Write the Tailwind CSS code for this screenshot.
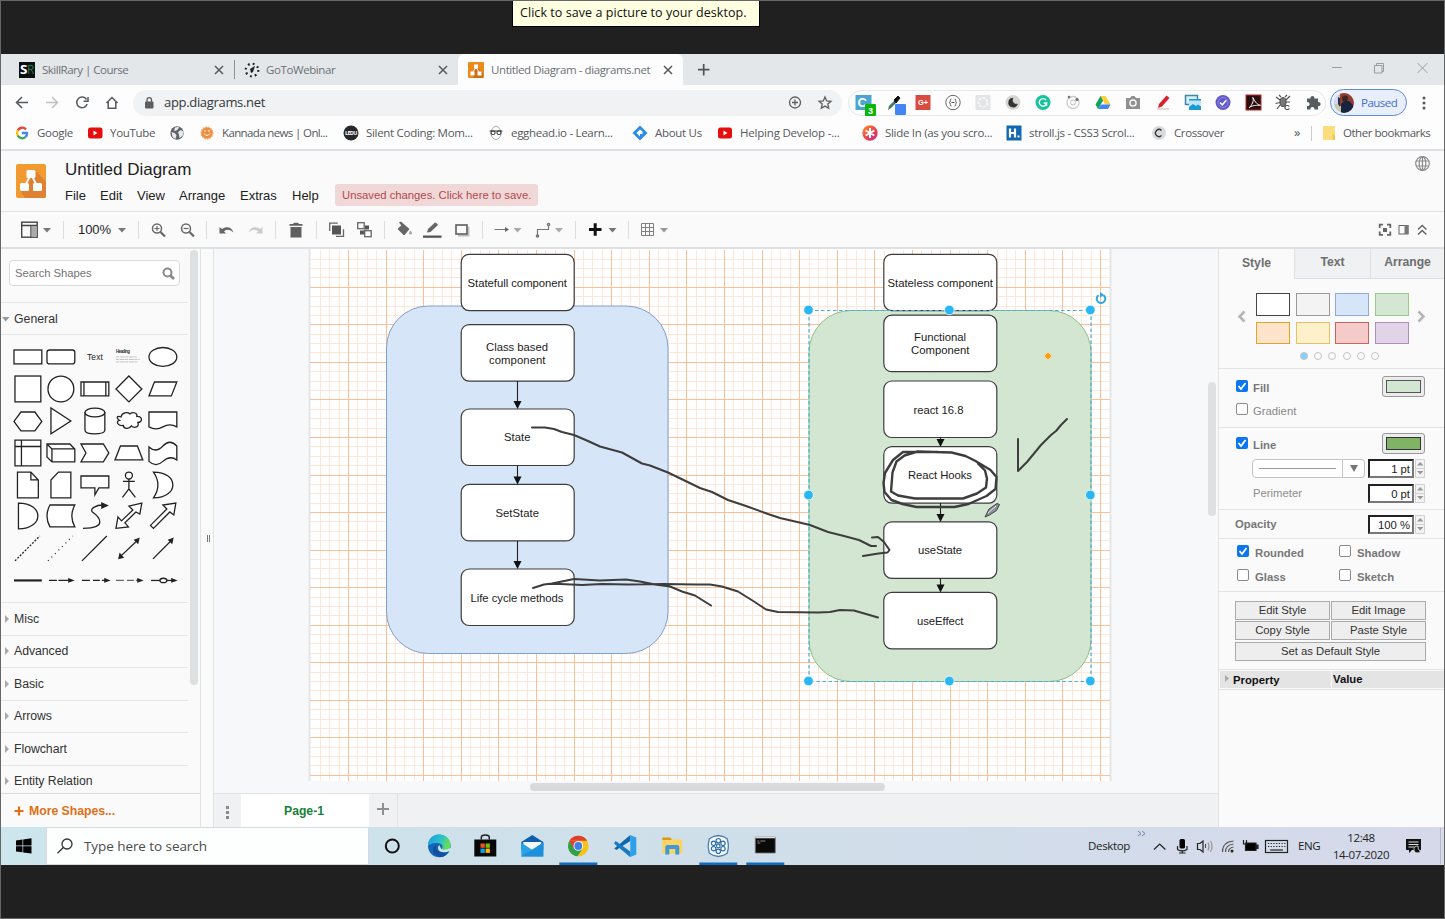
<!DOCTYPE html>
<html lang="en">
<head>
<meta charset="utf-8">
<title>Untitled Diagram - diagrams.net</title>
<script src="https://cdn.jsdelivr.net/npm/@tailwindcss/browser@4"></script>
</head>
<body class="overflow-hidden bg-[#202020] font-['Liberation_Sans',Arial,sans-serif]">
<div class="relative flex h-[919px] w-[1445px] flex-col overflow-hidden border border-[#666] bg-[#202020]">
  <div class="absolute left-[511px] top-[-1px] z-10 flex h-[27px] w-[248px] items-center border border-black bg-[#ffffe1] pl-[7px] font-['Open_Sans',sans-serif] text-[12.500px] tracking-[0.060px] text-[#111] whitespace-nowrap">Click to save a picture to your desktop.</div>
  <div class="h-[53px] shrink-0"></div>

  <!-- Browser tabs -->
  <div class="flex h-[31px] shrink-0 bg-[#e4e7ea] font-['Open_Sans',sans-serif] text-[11.5px] tracking-[-0.4px] text-[#6c7074] whitespace-nowrap">
    <div class="flex w-[233px] items-center pl-[18px]">
      <svg class="mr-[7px] h-4 w-4" viewBox="0 0 16 16"><rect width="16" height="16" fill="#0c0f10"/><text x="1" y="12" font-size="12" font-weight="700" fill="#fff" textLength="7" lengthAdjust="spacingAndGlyphs">S</text><text x="8" y="12" font-size="12" fill="#1d7a52" textLength="7" lengthAdjust="spacingAndGlyphs">R</text></svg>
      <span class="w-[170px] tracking-[-0.500px]">SkillRary | Course</span>
      <svg class="h-[14px] w-[14px]" viewBox="0 0 14 14" stroke="#55585c" stroke-width="1.5"><path d="M3 3l8 8M11 3l-8 8"/></svg>
    </div>
    <div class="my-auto h-[19px] w-px bg-[#8e9195]"></div>
    <div class="flex w-[223px] items-center pl-[9px]">
      <svg class="mr-[6px] h-4 w-4" viewBox="0 0 16 16" fill="#222"><circle cx="8" cy="8" r="6.3" fill="none" stroke="#222" stroke-width="2.2" stroke-dasharray="1.8 3.15"/><path d="M6 7l4-2.500 1-.5-.5 1.500L9 10l-2 1z"/></svg>
      <span class="w-[170px]">GoToWebinar</span>
      <svg class="h-[14px] w-[14px]" viewBox="0 0 14 14" stroke="#55585c" stroke-width="1.500"><path d="M3 3l8 8M11 3l-8 8"/></svg>
    </div>
    <div class="flex w-[225px] items-center rounded-t-md bg-[#fdfdfd] pl-[10px]">
      <svg class="mr-[7px] h-4 w-4" viewBox="0 0 16 16"><rect width="16" height="16" rx="1" fill="#ee8a1c"/><path d="M9 5l6 6v5H6l-3-4z" fill="#cf6c15"/><path d="M8 5l-3.500 6M8 5l3.500 6" stroke="#fff"/><path d="M6 2.500h4v4H6zM2.500 9.500h4v4h-4zM9.500 9.500h4v4h-4z" fill="#fff"/></svg>
      <span class="w-[170px]">Untitled Diagram - diagrams.net</span>
      <svg class="h-[14px] w-[14px]" viewBox="0 0 14 14" stroke="#55585c" stroke-width="1.500"><path d="M3 3l8 8M11 3l-8 8"/></svg>
    </div>
    <svg class="h-[31px] w-[40px]" viewBox="683 54 40 31" stroke="#505356" stroke-width="1.700"><path d="M698 69.700h11.500M703.700 64v11.500"/></svg>
    <div class="grow"></div>
    <svg class="h-[31px] w-[120px]" viewBox="1324 54 120 31" fill="none" stroke="#9a9c9f"><path d="M1332 67.500h10M1376.500 65v-1.500h7v8h-1.500M1374.500 65.500h7.500v7.500h-7.500zM1417.500 63l10 10M1427.500 63l-10 10"/></svg>
  </div>

  <!-- Address bar -->
  <div class="flex h-[35px] shrink-0 items-center bg-[#fdfdfd]">
    <svg class="h-[34px] w-[132px] shrink-0" viewBox="1 86 132 34" fill="none" stroke="#55595d" stroke-width="1.500"><path d="M28 102.500H16.500M22 97l-5.500 5.500L22 108"/><path stroke="#bfc1c3" d="M46 102.500h11.500M52 97l5.500 5.500L52 108"/><path d="M86.500 99.500a5.300 5.300 0 1 0 .6 4.500M88 97v4.300h-4.500"/><path d="M106.500 103l5.500-5.500 5.500 5.500M108.200 102v6.300h7.600V102"/></svg>
    <div class="flex h-[26px] w-[709px] shrink-0 items-center rounded-full bg-[#f0f2f3] pl-[10px]">
      <svg class="h-4 w-[14px]" viewBox="0 0 14 16"><rect x="2" y="6.500" width="8.500" height="7" rx="1" fill="#5b5f63"/><path d="M4 7V4.800a2.200 2.200 0 0 1 4.500 0V7" fill="none" stroke="#5b5f63" stroke-width="1.300"/></svg>
      <span class="ml-[7px] w-[620px] font-['Open_Sans',sans-serif] text-[13px] tracking-[-0.32px] text-[#33373b]">app.diagrams.net</span>
      <svg class="h-5 w-[50px] shrink-0" viewBox="784 93 50 20" fill="none" stroke="#5b5f63" stroke-width="1.300"><circle cx="795" cy="102.500" r="5.500"/><path d="M792 102.500h6M795 99.500v6"/><path d="M825 97l1.700 3.900 4.300.4-3.200 2.800.9 4.200-3.700-2.200-3.700 2.200.9-4.200-3.200-2.800 4.300-.4z"/></svg>
    </div>
    <div class="ml-[6px] flex h-[26px] w-[478px] shrink-0 items-center rounded-full border border-[#e6e8ea]">
      <svg class="h-[30px] w-[479px] shrink-0 overflow-visible" viewBox="849 88 479 30" font-family="Liberation Sans">
        <rect x="855.500" y="95" width="16" height="15" fill="#4aa5cf"/><text x="857.500" y="107" font-size="13" font-weight="700" fill="#fff">C</text><rect x="865" y="104" width="11" height="12" rx="1" fill="#0bb60b"/><text x="868" y="114" font-size="9" font-weight="700" fill="#fff">3</text>
        <path d="M888 110l1-4 6-6 2 2-6 6z" fill="#467760"/><path d="M894 100l4-4 2 2-4 5z" fill="#111" stroke="#111"/><rect x="895" y="104" width="11" height="11" rx="1" fill="#4285f4"/>
        <rect x="915.500" y="95" width="15" height="15" fill="#d84b40"/><text x="918" y="105" font-size="7.500" font-weight="700" fill="#fff">G+</text>
        <circle cx="953" cy="102.500" r="7.200" fill="#fff" stroke="#666"/><path d="M951.500 99q-1.500 0-1.200 1.500t-1 2q1.300.5 1 2t1.200 1.500M954.500 99q1.500 0 1.200 1.500t1 2q-1.300.5-1 2t-1.200 1.500M951.500 102.500h3" fill="none" stroke="#555"/>
        <rect x="975.500" y="95" width="15" height="15" rx="1" fill="#e3e4e5"/><circle cx="983" cy="102.500" r="4.500" fill="none" stroke="#f6f6f6" stroke-width="2" stroke-dasharray="3 1"/>
        <circle cx="1013" cy="102.500" r="7.500" fill="#d6d6d2"/><path d="M1013 98a4.600 4.600 0 1 0 4.500 6 4 4 0 0 1-4.500-6z" fill="#333" stroke="#333" stroke-width=".5"/>
        <circle cx="1043" cy="102.500" r="7.500" fill="#15c39a"/><path d="M1046 100a3.800 3.800 0 1 0 .8 3h-3M1046.500 103v3" fill="none" stroke="#fff" stroke-width="1.400"/>
        <circle cx="1073" cy="102.500" r="6" fill="none" stroke="#ccc" stroke-width="1.300"/><circle cx="1073" cy="102.500" r="2.500" fill="none" stroke="#bbb"/><circle cx="1069" cy="97" r="1.300" fill="#777"/><circle cx="1077" cy="99.500" r="1.500" fill="#666"/>
        <path d="M1100.500 96h5l-5 9-2.500 4-2.500-4.500z" fill="#12a35c"/><path d="M1100.500 96h5l5 8.500h-5.500z" fill="#ffcf3f"/><path d="M1101 104.500h9.500l-2.500 4.500h-10z" fill="#4285f4"/>
        <path d="M1126 98h4l1.500-2h3l1.500 2h4v11h-14z" fill="#909090"/><circle cx="1133" cy="103" r="3.800" fill="#f5f5f5"/><circle cx="1133" cy="103" r="2.300" fill="#909090"/>
        <path d="M1158 108l1-4 7.500-8.500 3 2.500-7.500 8.500z" fill="#d8232f"/><path d="M1157 109h12" stroke="#ccb6b6"/>
        <path d="M1185.500 95.500h12v9h-12z" fill="#d9eef8" stroke="#4285ab" stroke-width="1.500"/><path d="M1189 99h12v11h-12z" fill="#1a99d5"/><path d="M1189 107l4-3 3 2 2-1.500 3 2v-6h-12z" fill="#bfe6f8"/>
        <circle cx="1223" cy="102.500" r="7.500" fill="#6259c9"/><circle cx="1223" cy="102.500" r="5" fill="none" stroke="#8d86e0"/><path d="M1220 102.500l2.300 2.300 4-4.500" fill="none" stroke="#fff" stroke-width="1.500"/>
        <rect x="1246" y="95" width="15" height="15" fill="#2b0c0e" stroke="#b62a2e"/><path d="M1249 108c3-3 5-7 4-10s2 6 6.500 7-8-1-10.500 3z" fill="none" stroke="#fff"/>
        <g fill="none" stroke="#555" stroke-width="1.200"><ellipse cx="1283" cy="102" rx="3" ry="4.500" fill="#777"/><path d="M1280 100l-4-3M1286 100l4-4M1280 102.500l-4.500 1M1280 105l-3 4M1286 102h4M1281 97l-2-2M1285 97l2-2"/></g><text x="1284" y="110" font-size="8" font-weight="700" fill="#444">C</text>
        <path d="M1307 98.500h3.500a2 2 0 1 1 3.800 0h3.700v3.700a2 2 0 1 1 0 3.800v3.500h-3.700a2 2 0 1 0-3.800 0h-3.500V106a2 2 0 1 0 0-3.800z" fill="#575a5e"/>
      </svg>
    </div>
    <div class="ml-[4px] flex h-[27px] w-[77px] shrink-0 items-center rounded-full border-[1.500px] border-[#5d8bda] bg-[#e8effb] pl-[3px]">
      <svg class="h-5 w-5" viewBox="0 0 20 20"><defs><clipPath id="avatar"><circle cx="10" cy="10" r="10"/></clipPath></defs><g clip-path="url(#avatar)"><rect width="20" height="20" fill="#c4cbb4"/><rect x="6" width="14" height="13" fill="#923c34"/><path d="M7 20V11l3-3h5l4 4v8z" fill="#17233f"/><circle cx="11" cy="5.500" r="3" fill="#3a2624"/><path d="M0 3h5v8H0z" fill="#cdd8f0"/><path d="M4 4l2 1v9l-2-3z" fill="#2b2f45"/></g></svg>
      <span class="ml-[7px] font-['Open_Sans',sans-serif] text-[11.5px] tracking-[-0.5px] text-[#3b70cc]">Paused</span>
    </div>
    <svg class="ml-[12px] h-4 w-[10px]" viewBox="0 0 10 16" fill="#55595d"><circle cx="5" cy="3" r="1.500"/><circle cx="5" cy="8" r="1.500"/><circle cx="5" cy="13" r="1.500"/></svg>
  </div>

  <!-- Bookmarks -->
  <div class="flex h-[31px] shrink-0 items-center border-b-2 border-[#dfe1e7] bg-[#fdfdfd] pb-[3px] pl-[13px] font-['Open_Sans',sans-serif] text-[11.5px] tracking-[-0.3px] text-[#55585c] whitespace-nowrap">
    <div class="flex w-[73px] shrink-0 items-center gap-[7px]"><svg class="h-4 w-4" viewBox="0 0 16 16" fill="none" stroke-width="2.300"><path d="M12 4.500A5 5 0 0 0 3.700 5.500" stroke="#ea4335"/><path d="M3.700 5.500a5 5 0 0 0 0 5" stroke="#fbbc05"/><path d="M3.700 10.500a5 5 0 0 0 7.800 1.500" stroke="#34a853"/><path d="M11.500 12a5 5 0 0 0 1.500-4H8" stroke="#4285f4"/></svg>Google</div>
    <div class="flex w-[82px] shrink-0 items-center gap-[7px]"><svg class="h-4 w-4" viewBox="0 0 16 16"><rect x="1" y="2.500" width="14.500" height="11" rx="2.500" fill="#e60d0d"/><path d="M6.500 5.500v5l4-2.500z" fill="#fff"/></svg>YouTube</div>
    <div class="flex w-[30px] shrink-0 items-center"><svg class="h-4 w-4" viewBox="0 0 16 16"><circle cx="8" cy="8" r="6.700" fill="#606367"/><path d="M2.500 7l3 1 2 2-1 4-3-2zM6 2.500l4-.7-1 2.500-2 1.500h-2zM9 7l3-2 2.500 2-1 4-3 2-.5-3z" fill="#e9eaeb"/></svg></div>
    <div class="flex w-[144px] shrink-0 items-center gap-[7px] tracking-[-0.630px]"><svg class="h-4 w-4" viewBox="0 0 16 16"><circle cx="8" cy="8" r="5.800" fill="#ef8c3d" stroke="#f2a567" stroke-width="1.500" stroke-dasharray="1.500 1"/><path d="M5 8.500q3 4 6 0M5 6h2M9 6h2" fill="none" stroke="#fff"/></svg>Kannada news | Onl...</div>
    <div class="flex w-[145px] shrink-0 items-center gap-[7px]"><svg class="h-4 w-4" viewBox="0 0 16 16"><circle cx="8" cy="8" r="7.500" fill="#25272b"/><text x="2" y="10" font-size="5.500" font-weight="700" fill="#fff" textLength="12">LEDU</text></svg>Silent Coding: Mom...</div>
    <div class="flex w-[144px] shrink-0 items-center gap-[7px]"><svg class="h-4 w-4" viewBox="0 0 16 16" fill="none" stroke="#555"><path d="M3.500 5q4.500-8 9 0l.5 4q-1 5-5 5.500Q4 14 3 9z" stroke="#aaa"/><path d="M1.500 6h13" stroke="#333"/><rect x="3" y="6" width="4" height="3.500" rx="1.500" stroke="#222"/><rect x="9" y="6" width="4" height="3.500" rx="1.500" stroke="#222"/></svg>egghead.io - Learn...</div>
    <div class="flex w-[85px] shrink-0 items-center gap-[7px]"><svg class="h-4 w-4" viewBox="0 0 16 16"><path d="M8 .5L.5 8 8 15.500 15.500 8z" fill="#2d8ce8"/><path d="M8 4.500L4.500 8 8 11.500V9h2.500V6.500z" fill="#fff"/></svg>About Us</div>
    <div class="flex w-[145px] shrink-0 items-center gap-[7px] tracking-[-0.200px]"><svg class="h-4 w-4" viewBox="0 0 16 16"><rect x="1" y="2.500" width="14" height="11" rx="2.500" fill="#e60d0d"/><path d="M6.500 5.500v5l4-2.500z" fill="#fff"/></svg>Helping Develop -...</div>
    <div class="flex w-[144px] shrink-0 items-center gap-[7px]"><svg class="h-4 w-4" viewBox="0 0 16 16"><defs><linearGradient id="sun" x1="0" y1="0" x2="1" y2="1"><stop stop-color="#f9952d"/><stop offset=".6" stop-color="#e63e50"/><stop offset="1" stop-color="#c325a0"/></linearGradient></defs><circle cx="8" cy="8" r="7.700" fill="url(#sun)"/><path d="M8 3v10M3.700 5.500l8.600 5M12.300 5.500l-8.600 5" stroke="#fff" stroke-width="2"/></svg>Slide In (as you scro...</div>
    <div class="flex w-[145px] shrink-0 items-center gap-[7px]"><svg class="h-4 w-4" viewBox="0 0 16 16"><rect x=".5" y=".5" width="15" height="15" fill="#0e69b2"/><path d="M4 3.500v9M9 3.500v9M4 8h5" stroke="#fff" stroke-width="2.200"/><rect x="11.500" y="10.500" width="2" height="2" fill="#fff"/></svg>stroll.js - CSS3 Scrol...</div>
    <div class="flex w-[142px] shrink-0 items-center gap-[7px] tracking-[-0.400px]"><svg class="h-4 w-4" viewBox="0 0 16 16"><circle cx="8" cy="8" r="7" fill="#d9dadb"/><path d="M10.500 5.500a3.500 3.500 0 1 0 0 5" fill="none" stroke="#333" stroke-width="1.300"/></svg>Crossover</div>
    <div class="w-[18px] pl-px text-[13px]">»</div>
    <div class="h-[15px] w-px bg-[#c9cbce]"></div>
    <svg class="ml-[10px] h-4 w-[14px]" viewBox="0 0 14 16"><path d="M1 1h12v14H1z" fill="#fbdd7e"/><path d="M10.500 9.500h2.500V15h-2.500z" fill="#f0c94f"/></svg>
    <span class="ml-[7px] tracking-[-0.470px]">Other bookmarks</span>
  </div>

  <!-- Editor header -->
  <div class="flex h-[61px] shrink-0 border-b border-[#e2e3e5] bg-[#fafafa]">
    <svg class="ml-[15px] mt-[13px] h-[34px] w-[30px]" viewBox="16 164 30 34"><rect x="16" y="164" width="30" height="34" rx="2" fill="#f19a2f"/><path d="M35 170l11 12v14q0 2-2 2H25l-5-8 11-12z" fill="#de8130"/><path d="M31 174l-6 12M31 174l6 12" stroke="#fff" stroke-width="1.800"/><g fill="#fff"><rect x="26.500" y="170" width="9" height="8" rx="1.500"/><rect x="20" y="183" width="9" height="8" rx="1.500"/><rect x="33" y="183" width="9" height="8" rx="1.500"/></g></svg>
    <div class="ml-[19px] flex flex-col">
      <div class="mt-[8px] h-[20px] text-[17px] leading-[21px] tracking-[-0.020px] text-[#222]">Untitled Diagram</div>
      <div class="mt-[5px] flex h-[22px] items-center text-[13px] text-[#222]">
        <span class="w-[35px] pt-px">File</span><span class="w-[37px] pt-px">Edit</span><span class="w-[42px] pt-px">View</span><span class="w-[61px] pt-px">Arrange</span><span class="w-[52px] pt-px">Extras</span><span class="w-[43px] pt-px">Help</span>
        <span class="flex h-[22px] w-[203px] items-center rounded-[3px] bg-[#f0d8d9] pl-[7px] text-[11.300px] tracking-[-0.010px] text-[#b04a4b] whitespace-nowrap">Unsaved changes. Click here to save.</span>
      </div>
    </div>
    <div class="grow"></div>
    <svg class="mr-[13px] mt-[4px] h-[17px] w-[17px]" viewBox="0 0 17 17" fill="none" stroke="#8c8c8c" stroke-width="1.200"><circle cx="8.500" cy="8.500" r="6.800"/><ellipse cx="8.500" cy="8.500" rx="3.300" ry="6.800"/><path d="M8.500 1.700v13.600M2 6h13M2 11h13"/></svg>
  </div>

  <!-- Editor toolbar -->
  <div class="flex h-[37px] shrink-0 items-center border-b-2 border-[#dfe0e2] bg-[#fafafa]">
    <svg class="h-[35px] w-[62px]" viewBox="1 212 62 35"><g fill="none" stroke="#444" stroke-width="1.400"><rect x="21.700" y="222.200" width="15.500" height="15"/><path d="M22 225.500h15M31 225.500v12"/></g><rect x="31.500" y="226" width="5" height="11" fill="#aaa"/><path d="M43 228h8l-4 4.500z" fill="#777"/></svg>
    <div class="h-[18px] w-px bg-[#dcdcdc]"></div>
    <span class="ml-[14px] w-[40px] text-[13px] tracking-[-0.100px] text-[#222]">100%</span>
    <svg class="h-[35px] w-[20px]" viewBox="118 212 20 35"><path d="M118 228h8l-4 4.500z" fill="#777"/></svg>
    <div class="h-[18px] w-px bg-[#dcdcdc]"></div>
    <svg class="h-[35px] w-[67px]" viewBox="139 212 67 35" fill="none" stroke="#6a6a6a" stroke-width="1.500"><circle cx="157" cy="228.500" r="4.500"/><path d="M160.500 232l4.500 4.500" stroke-width="2.300"/><path d="M154.500 228.500h5M157 226v5" stroke-width="1.200"/><circle cx="186" cy="228.500" r="4.500"/><path d="M189.500 232l4.500 4.500" stroke-width="2.300"/><path d="M183.500 228.500h5" stroke-width="1.200"/></svg>
    <div class="h-[18px] w-px bg-[#dcdcdc]"></div>
    <svg class="h-[35px] w-[68px]" viewBox="207 212 68 35"><path d="M219.500 227v6.500h6.500l-2-2.300q5-3.200 9.500 1.300-2-5.500-7-5.200-2.500.1-4.500 1.700z" fill="#666"/><path d="M262.500 227v6.500H256l2-2.300q-5-3.200-9.500 1.300 2-5.500 7-5.200 2.500.1 4.500 1.700z" fill="#ccc"/></svg>
    <div class="h-[18px] w-px bg-[#dcdcdc]"></div>
    <svg class="h-[35px] w-[40px]" viewBox="276 212 40 35" fill="#606060"><path d="M289.500 224h3.500l1-1.300h4l1 1.300h3.500v1.700h-13zM290.500 227h11v10.500h-11z"/></svg>
    <div class="h-[18px] w-px bg-[#dcdcdc]"></div>
    <svg class="h-[35px] w-[67px]" viewBox="317 212 67 35"><g fill="none" stroke="#666" stroke-width="1.300"><path d="M329.700 231v-7.800h8M336 236.300h7.500v-7"/><rect x="357.700" y="222.700" width="6.500" height="6"/><rect x="364.700" y="230.700" width="6.500" height="6"/></g><rect x="332" y="225.500" width="9" height="9" fill="#555"/><path d="M365 225.500h4v4h-5v5h-4v-4h5z" fill="#555"/></svg>
    <div class="h-[18px] w-px bg-[#dcdcdc]"></div>
    <svg class="h-[35px] w-[97px]" viewBox="385 212 97 35"><path d="M399 222.500l2-1 8.500 7.500-4.500 5.500q-1 1-2 0l-4.700-4.700q-.8-.8 0-1.800l3-2.500z" fill="#666"/><path d="M410.500 230.500q3.500 4-.2 4-3-.5.200-4z" fill="#aaa"/><path d="M427 232.500l1-3.500 7-6.500q2.500.5 3 2.500l-7.500 7z" fill="#666"/><rect x="423" y="235.500" width="18.500" height="2.300" fill="#555"/><path d="M458 235.700h10.500v-9" fill="none" stroke="#bbb" stroke-width="1.800"/><rect x="456" y="225" width="11" height="9" fill="#fafafa" stroke="#666" stroke-width="1.700"/></svg>
    <div class="h-[18px] w-px bg-[#dcdcdc]"></div>
    <svg class="h-[35px] w-[92px]" viewBox="483 212 92 35" fill="none" stroke="#777" stroke-width="1.200"><path d="M494.500 229.500h12M537.500 236v-6.500h11v-5"/><path d="M505 227l4 2.500-4 2.500z" fill="#666" stroke="none"/><circle cx="548.500" cy="224.500" r="1.200"/><circle cx="537.500" cy="236" r="1.200" fill="#777"/><path d="M513.500 228h8l-4 4.500zM555 228h8l-4 4.500z" fill="#aaa" stroke="none"/></svg>
    <div class="h-[18px] w-px bg-[#dcdcdc]"></div>
    <svg class="h-[35px] w-[52px]" viewBox="576 212 52 35"><path d="M589 229.500h12.500M595.200 223.300v12.500" stroke="#111" stroke-width="3"/><path d="M608.500 228h8l-4 4.500z" fill="#777"/></svg>
    <div class="h-[18px] w-px bg-[#dcdcdc]"></div>
    <svg class="h-[35px] w-[60px]" viewBox="629 212 60 35"><path d="M641.500 223.500h12v12h-12zM645.500 223.500v12M649.500 223.500v12M641.500 227.500h12M641.500 231.500h12" fill="none" stroke="#808080"/><path d="M660 228h8l-4 4.500z" fill="#999"/></svg>
    <div class="grow"></div>
    <svg class="h-[35px] w-[74px]" viewBox="1370 212 74 35" fill="none" stroke="#666" stroke-width="1.800"><path d="M1379.700 228v-3.300h3.300M1387 224.700h3.300v3.300M1390.300 231.500v3.300h-3.300M1383 234.800h-3.300v-3.300"/><rect x="1383" y="228" width="4" height="4" fill="#666" stroke="none"/><rect x="1399" y="225.500" width="9" height="8.500" stroke-width="1"/><path d="M1404.500 225h4v9h-4z" fill="#777" stroke="none"/><path d="M1418 229.500l4.200-4 4.200 4M1418 234.500l4.200-4 4.200 4" stroke-width="1.500"/></svg>
  </div>

  <!-- Workspace -->
  <div class="flex h-[578px] shrink-0 bg-[#fafafa]">
    <!-- Shape library -->
    <div class="flex w-[200px] shrink-0 flex-col border-r border-[#e2e3e5] text-[#333]">
      <div class="flex h-[544px] overflow-hidden">
        <div class="w-[187px] shrink-0">
          <div class="h-[54px] border-b border-[#e6e6e6] pl-[8px] pt-[11px]">
            <div class="flex h-[26px] w-[171px] items-center justify-between rounded border border-[#dadada] bg-white pl-[5px] pr-[4px] pt-px text-[11.300px] tracking-[-0.050px] text-[#757575]"><span>Search Shapes</span><svg class="mb-px h-[13px] w-[13px]" viewBox="0 0 13 13" fill="none" stroke="#8a8a8a" stroke-width="2"><circle cx="5.500" cy="5.500" r="4"/><path d="M8.500 8.500l3.500 3.500" stroke-width="2.600"/></svg></div>
          </div>
          <div class="flex h-[32px] items-center border-b border-[#e6e6e6]"><svg class="mr-[4px] h-2 w-[9px]" viewBox="0 0 9 8"><path d="M1 2h7.500L4.700 6.500z" fill="#999"/></svg><span class="pt-px text-[12.300px]">General</span></div>
          <div class="ml-[9.500px] grid h-[267px] w-[169px] grid-cols-5 content-start pt-[6px] *:h-[31.900px] *:w-full *:overflow-visible *:fill-white *:stroke-[#222] *:stroke-[1.300]">
            <svg viewBox="0 0 34 32"><rect x="3" y="9" width="28" height="14"/></svg>
            <svg viewBox="0 0 34 32"><rect x="3" y="9" width="28" height="14" rx="2.500"/></svg>
            <svg viewBox="0 0 34 32"><text x="9" y="19" font-size="8.500" stroke="none" fill="#222" textLength="16">Text</text></svg>
            <svg viewBox="0 0 34 32"><text x="4" y="12.500" font-size="4.500" font-weight="700" stroke="none" fill="#333" textLength="14">Heading</text><path d="M4 16h21M4 18.500h24M4 21h22" stroke="#bbb" stroke-width=".9" stroke-dasharray="3 .7 5 .6"/></svg>
            <svg viewBox="0 0 34 32"><ellipse cx="17" cy="16" rx="14" ry="9.500"/></svg>
            <svg viewBox="0 0 34 32"><rect x="4" y="3" width="26" height="26"/></svg>
            <svg viewBox="0 0 34 32"><circle cx="17" cy="16" r="13"/></svg>
            <svg viewBox="0 0 34 32"><path d="M3 9h28v14H3zM6 9v14M28 9v14"/></svg>
            <svg viewBox="0 0 34 32"><path d="M17 3l13 13-13 13L4 16z"/></svg>
            <svg viewBox="0 0 34 32"><path d="M8.500 9H31l-5.500 14H3z"/></svg>
            <svg viewBox="0 0 34 32"><path d="M10 7h14l7 9.500-7 9.500H10L3 16.500z"/></svg>
            <svg viewBox="0 0 34 32"><path d="M7 3v26l20-13z"/></svg>
            <svg viewBox="0 0 34 32"><path d="M7 7v18c0 5.300 20 5.300 20 0V7"/><ellipse cx="17" cy="7.500" rx="10" ry="4.500"/></svg>
            <svg viewBox="0 0 34 32"><path d="M9 12c1-5 7-5 9-3 3-2.500 8-1 7 2.500 6-.5 6 6 1 6 2 5-4 6-6.500 3.500-2 3.500-8 3-8-.5-6 1-8-4.500-4-5C4 13 5 10 9 12z"/></svg>
            <svg viewBox="0 0 34 32"><path d="M3 7h28v15q-7-4-14 0t-14 0z"/></svg>
            <svg viewBox="0 0 34 32"><path d="M4 3h26v26H4zM4 9.500h26M10.500 3v26"/></svg>
            <svg viewBox="0 0 34 32"><path d="M3 7h23l5 5v13H8l-5-5zM8 25V12L3 7M8 12h23"/></svg>
            <svg viewBox="0 0 34 32"><path d="M3 7h22.500l5.500 9-5.500 9H3l5-9z"/></svg>
            <svg viewBox="0 0 34 32"><path d="M8.500 9h17L31 23H3z"/></svg>
            <svg viewBox="0 0 34 32"><path d="M3 10q7 6.500 14-1t14 0v14q-7-5-14 1.500t-14 0z"/></svg>
            <svg viewBox="0 0 34 32"><path d="M6.500 3H20l7.500 8v18h-21zM20 3v8h7.500"/></svg>
            <svg viewBox="0 0 34 32"><path d="M14.500 3H27v26H7V11z"/></svg>
            <svg viewBox="0 0 34 32"><path d="M3 7h28v12H21l-4 7v-7H3z"/></svg>
            <svg viewBox="0 0 34 32"><circle cx="17" cy="6.500" r="3.500"/><path d="M17 10v10M11 12.500h12M17 20l-6.500 8.500M17 20l6.500 8.500" fill="none"/></svg>
            <svg viewBox="0 0 34 32"><path d="M7.500 3c26 0 26 26 0 26q9-13 0-26z"/></svg>
            <svg viewBox="0 0 34 32"><path d="M7.500 3c26 0 26 26 0 26z"/></svg>
            <svg viewBox="0 0 34 32"><path d="M6 5h25q-6 11 0 22H6q-6-11 0-22z"/></svg>
            <svg viewBox="0 0 34 32"><path d="M5 28.500c26 0 16-12 9.500-16.500-3-3 3-7 11-7" fill="none"/><path d="M24 3l5.500 2.500L24 8z" fill="#222"/></svg>
            <svg viewBox="0 0 34 32"><path d="M30 3l-2 11-4-2-11 11 3.500 4L4 28.500 6 17l3.500 4L21 10l-4-4z"/></svg>
            <svg viewBox="0 0 34 32"><path d="M30 3l-2 12-4-3L7.500 28.500l-3-3L21 9l-4-4z"/></svg>
            <svg viewBox="0 0 34 32"><path d="M4 29L29 4" stroke-dasharray="2 1.500"/></svg>
            <svg viewBox="0 0 34 32"><path d="M4 29L29 4" stroke-dasharray="1 4"/></svg>
            <svg viewBox="0 0 34 32"><path d="M4 29L29 4"/></svg>
            <svg viewBox="0 0 34 32"><path d="M8 25L26 8"/><path d="M7 26.500l1-4.500 3 3.500zM27 6.500l-4 1.500 3 3z" fill="#222"/></svg>
            <svg viewBox="0 0 34 32"><path d="M7 27L26 8"/><path d="M27 6.500l-4 1.500 3 3z" fill="#222"/></svg>
            <svg viewBox="0 0 34 32"><path d="M3 16.500h28" stroke-width="2.200"/></svg>
            <svg viewBox="0 0 34 32"><path d="M5 16.500h8m1.500 0h13"/><path d="M25 15l4 1.500-4 1.500z" fill="#222"/></svg>
            <svg viewBox="0 0 34 32"><path d="M4 16.500h8m3 0h7m2 0h4"/><path d="M27 15l4 1.500-4 1.500z" fill="#222"/></svg>
            <svg viewBox="0 0 34 32"><path d="M4 16.500h8m3 0h7m2 0h3" stroke="#666"/><path d="M26 15l4 1.500-4 1.500z" fill="#444"/></svg>
            <svg viewBox="0 0 34 32"><path d="M5 16.500h22"/><ellipse cx="17.500" cy="16.500" rx="3.500" ry="2.200"/><path d="M26 15l4 1.500-4 1.500z" fill="#222"/></svg>
          </div>
          <div class="flex flex-col border-t border-[#e6e6e6] text-[12.300px] tracking-[-0.050px] *:flex *:h-[32.500px] *:items-center *:border-b *:border-[#e6e6e6]">
            <div><svg class="mr-[4px] h-2 w-[9px]" viewBox="0 0 9 8"><path d="M4 0l4 4-4 4z" fill="#aaa"/></svg>Misc</div>
            <div><svg class="mr-[4px] h-2 w-[9px]" viewBox="0 0 9 8"><path d="M4 0l4 4-4 4z" fill="#aaa"/></svg>Advanced</div>
            <div><svg class="mr-[4px] h-2 w-[9px]" viewBox="0 0 9 8"><path d="M4 0l4 4-4 4z" fill="#aaa"/></svg>Basic</div>
            <div><svg class="mr-[4px] h-2 w-[9px]" viewBox="0 0 9 8"><path d="M4 0l4 4-4 4z" fill="#aaa"/></svg>Arrows</div>
            <div><svg class="mr-[4px] h-2 w-[9px]" viewBox="0 0 9 8"><path d="M4 0l4 4-4 4z" fill="#aaa"/></svg>Flowchart</div>
            <div><svg class="mr-[4px] h-2 w-[9px]" viewBox="0 0 9 8"><path d="M4 0l4 4-4 4z" fill="#aaa"/></svg>Entity Relation</div>
          </div>
        </div>
        <div class="ml-[2px] mt-[1px] h-[435px] w-[8px] rounded-[4px] bg-[#dedfe0]"></div>
      </div>
      <div class="flex grow items-center gap-[5px] border-t border-[#dcdcdc] pl-[13px] pt-px text-[12.300px] font-bold tracking-[-0.050px] text-[#e07018]"><svg class="mb-px h-[10px] w-[10px]" viewBox="0 0 10 10"><path d="M.5 5h9M5 .5v9" stroke="#e07018" stroke-width="2.200"/></svg>More Shapes...</div>
    </div>
    <div class="flex w-[13px] shrink-0 items-center justify-center border-r border-[#e2e3e5] pl-[3px]"><div class="h-[7px] w-[3px] border-x border-[#777]"></div></div>

    <!-- Canvas -->
    <div class="flex w-[1004px] shrink-0 flex-col bg-[#f6f8fa]">
      <svg class="h-[544px] w-[1004px]" viewBox="214 249 1004 544" font-family="Liberation Sans" font-size="11.300" fill="#222">
        <rect x="310" y="249" width="800" height="532" fill="#fff"/>
        <path d="M309.500 249v532M1110.500 249v532" stroke="#e3e5e7" stroke-width="2"/>
        <path id="minor" stroke="#fee6d8" fill="none"/>
        <path id="major" stroke="#fdbf96" fill="none"/>
        <rect x="386.500" y="306" width="281.500" height="347.500" rx="42" fill="#d7e5f8" stroke="#7f9fcc"/>
        <rect x="809" y="310.500" width="282" height="371" rx="42" fill="#d3e6d2" stroke="#8cc084"/>
        <g fill="#fff" stroke="#3c3c3c" stroke-width="1.200">
          <rect x="461.200" y="254.300" width="113" height="56.300" rx="8"/><rect x="461.200" y="324.600" width="113" height="56.500" rx="8"/><rect x="461.200" y="409" width="113" height="56.500" rx="8"/><rect x="461.200" y="484.400" width="113" height="56.500" rx="8"/><rect x="461.200" y="569" width="113" height="56.500" rx="8"/>
          <rect x="883.800" y="254.300" width="113" height="56.300" rx="8"/><rect x="883.800" y="315.200" width="113" height="56.500" rx="8"/><rect x="883.800" y="381" width="113" height="56.500" rx="8"/><rect x="883.800" y="446.600" width="113" height="56.500" rx="8"/><rect x="883.800" y="521.800" width="113" height="56.500" rx="8"/><rect x="883.800" y="592.300" width="113" height="56.500" rx="8"/>
        </g>
        <path d="M517.500 381v22M517.500 465.500v13M517.500 541v22M940.500 437v4M940.500 503v13M940.500 578v8" stroke="#222" stroke-width="1.100"/>
        <path d="M513.500 401h8l-4 8zM513.500 476.500h8l-4 8zM513.500 561h8l-4 8zM936.500 439h8l-4 8zM936.500 514h8l-4 8zM936.500 584.500h8l-4 8z" fill="#111"/>
        <g>
          <text x="467.500" y="286.700" textLength="99.500">Statefull component</text>
          <text x="486" y="350.700" textLength="62">Class based</text><text x="489" y="364" textLength="56.500">component</text>
          <text x="504" y="441.300" textLength="26.500">State</text>
          <text x="495.500" y="516.500" textLength="43.500">SetState</text>
          <text x="470.500" y="601.500" textLength="93">Life cycle methods</text>
          <text x="887.500" y="286.700" textLength="105.500">Stateless component</text>
          <text x="914" y="341.300" textLength="52">Functional</text><text x="911" y="354.300" textLength="58.500">Component</text>
          <text x="913.500" y="413.500" textLength="50">react 16.8</text>
          <text x="908" y="479.200" textLength="64">React Hooks</text>
          <text x="918" y="554" textLength="44">useState</text>
          <text x="917" y="624.700" textLength="46.500">useEffect</text>
        </g>
        <path d="M809 310.500h282v371H809z" fill="none" stroke="#45b0d8" stroke-width="1.200" stroke-dasharray="3.500 2.500"/>
        <g fill="#29b6f2" stroke="#fff" stroke-width=".7"><circle cx="808.500" cy="310" r="4.800"/><circle cx="949.300" cy="310" r="4.800"/><circle cx="1090.300" cy="310" r="4.800"/><circle cx="808.500" cy="495" r="4.800"/><circle cx="1090.300" cy="495" r="4.800"/><circle cx="808.500" cy="681" r="4.800"/><circle cx="949.300" cy="681" r="4.800"/><circle cx="1090.300" cy="681" r="4.800"/></g>
        <path d="M1098.500 295.300a4.300 4.300 0 1 0 5 0" fill="none" stroke="#29a9de" stroke-width="2"/><path d="M1100 292v5.500l4.300-2.500z" fill="#29a9de"/>
        <path d="M1048 352l4 4-4 4-4-4z" fill="#ff9d0a" stroke="#fbe6c4" stroke-width=".8"/>
        <g fill="none" stroke="#3d3d3d" stroke-width="2" stroke-linecap="round" stroke-linejoin="round">
          <path d="M532 427.500h13l9 1.500 8 3 12 3 14 6 12 5.500 22 6 20 11 8 2 18 7 32 15.500 12 4 16 8 18 6 22 8 12 4 13 3 17 4 18 7 16 4 15 4 12 6h5M872 537.500l6-.5 6 5 5.500 8-2 2.500-9 1-15.500 2.500"/>
          <path d="M533 588l11-3.500 8-1 22-4.500 26 1.500 26-1 14 2 15 3 15 2 12 5 13 4 16 10M548 584h12l22 1 20-1 26 .5 36-.5 32 .5h14l12 2 16 5 16 10 12 8 12 2.500 40 .5 12-.5 10-2 14 .5 12 3.500 12 3.500"/>
          <path stroke-width="2.400" d="M938 452h-35l-10 8-8 13-1.500 10 1 9 7 8 11 4 14 3h38l14-3 18-8 9-7 1-12-6-7-15-9-10-5-14-3.500-34-1-13 4-8 6-4 11-1.500 19 7 4 17 3h48l14-5 9-6 1-9-2-8-7-7"/>
          <path d="M1018 439v32l9-9 14-17 10-10 5-4 5-6 6-6"/>
        </g>
        <path d="M985 517l4-8 8-5.500 2.500 1-3 6-7 4.500z" fill="#8b9297" stroke="#444"/><path d="M988 513l8-7" stroke="#e7e7e7"/>
        <rect x="530" y="783" width="355" height="8" rx="4" fill="#d9dadb"/>
        <rect x="1208" y="382" width="8" height="134" rx="4" fill="#dfe0e2"/>
      </svg>
      <div class="flex h-[34px] border-t border-[#dfe1e3] bg-[#f0f1f3]">
        <div class="flex w-[27px] flex-col items-center justify-center gap-[2.500px] pt-1 *:h-[2.500px] *:w-[2.500px] *:bg-[#8a8a8a]"><i></i><i></i><i></i></div>
        <div class="flex w-[128px] items-center justify-center bg-white pr-[2px] pt-[2px] text-[12.200px] font-bold text-[#188038]">Page-1</div>
        <div class="flex w-[29px] items-center justify-center border-r border-[#e2e3e5] pb-[3px]"><svg class="h-3 w-3" viewBox="0 0 12 12"><path d="M0 6h12M6 0v12" stroke="#909090" stroke-width="2"/></svg></div>
      </div>
    </div>

    <!-- Format panel -->
    <div class="flex grow flex-col border-l border-[#e2e3e5] text-[11.300px] text-[#777]">
      <div class="flex h-[30px] shrink-0 text-[12.200px] font-bold text-[#6e6e6e] *:flex *:items-center *:justify-center *:pb-[2px]">
        <div class="w-[75px]">Style</div><div class="w-[76px] border-b border-l border-[#dfe0e2] bg-[#eff1f3]">Text</div><div class="grow border-b border-l border-[#dfe0e2] bg-[#eff1f3]">Arrange</div>
      </div>
      <div class="h-[90px] shrink-0 border-b border-[#e2e3e5] pt-[14px]">
        <div class="flex items-center pl-[18px]">
          <svg class="mb-[5px] mr-[10px] h-[13px] w-[9px]" viewBox="0 0 9 13" fill="none" stroke="#b5b5b5" stroke-width="2.600"><path d="M7.500 1.500l-5 5 5 5"/></svg>
          <div class="grid grid-cols-4 gap-x-[5.600px] gap-y-[6px] *:h-[22.500px] *:w-[34px] *:border">
            <div class="border-[#444] bg-white"></div><div class="border-[#999] bg-[#f3f3f3]"></div><div class="border-[#8ea9d4] bg-[#d7e5f8]"></div><div class="border-[#9cc98c] bg-[#d3e7d2]"></div>
            <div class="border-[#e0a42b] bg-[#fde4cb]"></div><div class="border-[#e2c467] bg-[#fdf0ca]"></div><div class="border-[#c9635f] bg-[#f5cbc9]"></div><div class="border-[#ae8fc0] bg-[#e0d4e6]"></div>
          </div>
          <svg class="mb-[5px] ml-[8px] h-[13px] w-[9px]" viewBox="0 0 9 13" fill="none" stroke="#b5b5b5" stroke-width="2.600"><path d="M1.500 1.500l5 5-5 5"/></svg>
        </div>
        <div class="mt-[8px] flex gap-[6.200px] pl-[81px] *:h-[8px] *:w-[8px] *:rounded-full *:border *:border-[#c4c4c4]"><i class="bg-[#85d0f8]"></i><i></i><i></i><i></i><i></i><i></i></div>
      </div>
      <div class="flex h-[59px] shrink-0 border-b border-[#e2e3e5] pl-[17px]">
        <div class="w-[146px] pt-[11px]">
          <div class="flex h-[15px] gap-[5px] font-bold"><svg class="h-3 w-3" viewBox="0 0 12 12"><rect width="12" height="12" rx="2" fill="#0b76ef"/><path d="M2.500 6l2.500 3L9.500 3" fill="none" stroke="#fff" stroke-width="1.800"/></svg>Fill</div>
          <div class="mt-[8px] flex h-[15px] gap-[5px] text-[#888]"><span class="h-3 w-3 rounded-[2px] border border-[#8a8a8a] bg-white"></span>Gradient</div>
        </div>
        <div class="mt-[7px] h-[21px] w-[43px] rounded-[3px] border border-[#999] bg-[#ececec] p-[3px]"><div class="h-[13px] w-[35px] border border-[#555] bg-[#d3e6d2]"></div></div>
      </div>
      <div class="h-[82px] shrink-0 border-b border-[#e2e3e5] pl-[17px] pt-[5px]">
        <div class="flex h-[26px]">
          <div class="flex w-[146px] gap-[5px] pt-[4px] font-bold"><svg class="h-3 w-3" viewBox="0 0 12 12"><rect width="12" height="12" rx="2" fill="#0b76ef"/><path d="M2.500 6l2.500 3L9.500 3" fill="none" stroke="#fff" stroke-width="1.800"/></svg>Line</div>
          <div class="h-[21px] w-[43px] rounded-[3px] border border-[#999] bg-[#ececec] p-[3px]"><div class="h-[13px] w-[35px] border border-[#333] bg-[#80b366]"></div></div>
        </div>
        <div class="flex h-[20px] pl-[16px] text-[#222]">
          <div class="flex h-[19px] w-[91px] items-center rounded-l border border-[#c4c4c4] bg-white px-[6px]"><div class="h-px w-full bg-[#999]"></div></div>
          <div class="mr-[3px] flex w-[22px] h-[19px] items-center justify-center rounded-r border border-l-0 border-[#c4c4c4] bg-white"><svg class="h-[7px] w-[8px]" viewBox="0 0 8 7"><path d="M0 0h8L4 7z" fill="#777"/></svg></div>
          <div class="h-[19px] w-[46px] border-2 border-b-[#777] border-l-[#222] border-r-[#777] border-t-[#222] bg-white pr-[2px] text-right leading-[16px]">1 pt</div>
          <svg class="ml-[1px] h-[19px] w-[10px]" viewBox="0 0 10 19"><path d="M.5.500h9v9h-9zM.5 9.500h9v9h-9z" fill="#f3f3f3" stroke="#d0d0d0"/><path d="M2 6.500h6.500L5.200 3zM2 12h6.500l-3.300 3.500z" fill="#999"/></svg>
        </div>
        <div class="mt-[5px] flex h-[19px] pl-[17px]">
          <div class="w-[115px] pt-[1px] text-[#8c8c8c]">Perimeter</div>
          <div class="h-[19px] w-[46px] border-2 border-b-[#777] border-l-[#222] border-r-[#777] border-t-[#222] bg-white pr-[2px] text-right leading-[16px] text-[#222]">0 pt</div>
          <svg class="ml-[1px] h-[19px] w-[10px]" viewBox="0 0 10 19"><path d="M.5.500h9v9h-9zM.5 9.500h9v9h-9z" fill="#f3f3f3" stroke="#d0d0d0"/><path d="M2 6.500h6.500L5.200 3zM2 12h6.500l-3.300 3.500z" fill="#999"/></svg>
        </div>
      </div>
      <div class="flex h-[29px] shrink-0 border-b border-[#e2e3e5] pl-[16px] pt-[5px]">
        <div class="w-[133px] pt-[1px] font-bold">Opacity</div>
        <div class="h-[19px] w-[46px] border-2 border-b-[#777] border-l-[#222] border-r-[#777] border-t-[#222] bg-white pr-[2px] text-right leading-[16px] text-[#222]">100 %</div>
        <svg class="ml-[1px] h-[19px] w-[10px]" viewBox="0 0 10 19"><path d="M.5.500h9v9h-9zM.5 9.500h9v9h-9z" fill="#f3f3f3" stroke="#d0d0d0"/><path d="M2 6.500h6.500L5.200 3zM2 12h6.500l-3.300 3.500z" fill="#999"/></svg>
      </div>
      <div class="grid h-[53px] shrink-0 grid-cols-[102px_100px] content-start gap-y-[9px] border-b border-[#e2e3e5] pl-[18px] pt-[6px] font-bold *:flex *:h-[15px] *:gap-[6px]">
        <div><svg class="h-3 w-3" viewBox="0 0 12 12"><rect width="12" height="12" rx="2" fill="#0b76ef"/><path d="M2.500 6l2.500 3L9.500 3" fill="none" stroke="#fff" stroke-width="1.800"/></svg>Rounded</div>
        <div><span class="h-3 w-3 rounded-[2px] border border-[#8a8a8a] bg-white"></span>Shadow</div>
        <div><span class="h-3 w-3 rounded-[2px] border border-[#8a8a8a] bg-white"></span>Glass</div>
        <div><span class="h-3 w-3 rounded-[2px] border border-[#8a8a8a] bg-white"></span>Sketch</div>
      </div>
      <div class="grid h-[78px] shrink-0 grid-cols-[95px_95px] content-start gap-x-px gap-y-[1.300px] border-b border-[#e2e3e5] pl-[16px] pt-[9px] text-[#333] *:flex *:h-[19px] *:items-center *:justify-center *:border *:border-[#aaa] *:bg-[#eeeeee]">
        <div>Edit Style</div><div>Edit Image</div><div>Copy Style</div><div>Paste Style</div><div class="col-span-2">Set as Default Style</div>
      </div>
      <div class="flex h-[20px] shrink-0 border-b border-[#e2e3e5] pl-px pt-px font-bold text-[#111] *:flex *:h-[17px] *:items-center *:bg-[#e4e4e4]">
        <div class="w-[111px] pt-[2px]"><svg class="mb-1 ml-[4px] mr-[3px] h-[7px] w-[6px]" viewBox="0 0 6 7"><path d="M1 0l4 3.500L1 7z" fill="#aaa"/></svg>Property</div><div class="ml-px grow pl-[1px]">Value</div>
      </div>
    </div>
  </div>

  <!-- Taskbar -->
  <div class="flex h-[38px] shrink-0 bg-linear-to-r from-[#cde5ec] via-[#cfdfea] to-[#d6d9ea] font-['Open_Sans',sans-serif] text-[#222]">
    <div class="flex w-[45px] items-center pl-[15px]"><svg class="h-4 w-4" viewBox="0 0 16 16" fill="#000"><path d="M0 2.500l6.500-1v6H0zM7.200 1.400L15.500.2v7.300H7.200zM0 8.300h6.500v6L0 13.400zM7.200 8.300h8.300v7.300l-8.300-1.200z"/></svg></div>
    <div class="flex w-[323px] items-center border border-[#d4dbe0] bg-[#fdfefe] pl-[10px]"><svg class="h-4 w-4" viewBox="0 0 16 16" fill="none" stroke="#333" stroke-width="1.300"><circle cx="10" cy="6" r="5"/><path d="M6.300 9.500L.5 15.200"/></svg><span class="ml-[11px] text-[13.500px] tracking-[-0.070px] text-[#4c4c4c]">Type here to search</span></div>
    <div class="flex *:h-[38px] *:w-[46.600px] *:shrink-0">
      <svg viewBox="-23.300 -19 46.600 38"><circle r="6.500" fill="none" stroke="#111" stroke-width="2"/></svg>
      <svg viewBox="-23.300 -19 46.600 38"><defs><linearGradient id="edge" x1="0" y1="0" x2="1" y2=".3"><stop stop-color="#1a9be0"/><stop offset=".6" stop-color="#2cc0ce"/><stop offset="1" stop-color="#64dd5c"/></linearGradient></defs><circle r="11.300" fill="#1766b5"/><path d="M-11.300 0a11.300 11.300 0 0 1 22.600-1c0 6-7 6-9 4 2-2 1-5-2.300-5.800C-6-4-11-1-11.300 0z" fill="url(#edge)"/><path d="M-3-2c-2 6 4 10 10 8 3-1 0 4-4 5-8 0-13-7-6-13z" fill="#1351a0"/><path d="M0-1c-4 5 2 9.500 10.500 6L13 3 11 2Q6 5 2 3z" fill="#cde4ec"/></svg>
      <svg viewBox="-23.300 -19 46.600 38"><path d="M-4-6.500v-2q0-2.500 4-2.500t4 2.500v2" fill="none" stroke="#222" stroke-width="1.500"/><path d="M-11-6.500h22v17h-22z" fill="#080808"/><path d="M-4.800-2.500h4.300v4.300h-4.300z" fill="#f25022"/><path d="M.3-2.500h4.300v4.300H.3z" fill="#7fba00"/><path d="M-4.800 2.600h4.300v4.300h-4.300z" fill="#00a4ef"/><path d="M.3 2.600h4.300v4.300H.3z" fill="#ffb900"/></svg>
      <svg viewBox="-23.300 -19 46.600 38"><path d="M-11-4L0-11 11-4v8h-22z" fill="#0d5cad"/><path d="M-9-4H9v6L0 8l-9-6z" fill="#f2f8fc"/><path d="M-11-3.500L0 4l11-7.500v14h-22z" fill="#2aa3e6"/><path d="M-11 10.500L11-3.500v14z" fill="#1d8fdb"/></svg>
      <svg viewBox="-23.300 -19 46.600 38"><circle r="10.300" fill="#fbc116"/><path d="M-8.900-5.200A10.300 10.300 0 0 1 8.900-5.200H0z" fill="#df3e30"/><path d="M-8.900-5.200A10.300 10.300 0 0 0-1 10.200L4 3.500-4 2.500z" fill="#2da14c"/><path d="M-8.900-5.200L-4.500 2.500 0-4.500z" fill="#df3e30"/><circle r="4.800" fill="#fff"/><circle r="3.900" fill="#3f7fe8"/><path d="M-19 16.500h38v2.500h-38z" fill="#0a6cc4"/></svg>
      <svg viewBox="-23.300 -19 46.600 38"><path d="M-10-5l15 12v4L-11-2.500z" fill="#1b80cc"/><path d="M-11 2.500L5-11v6L-9 4z" fill="#0d69ad"/><path d="M-9-4.500L5 5.500V11l-16-13.500z" fill="#1779c2"/><path d="M5-11l6 2.500v17L5 11z" fill="#2f9fe8"/></svg>
      <svg viewBox="-23.300 -19 46.600 38"><path d="M-10-8.500h8l2 2h10v14h-20z" fill="#fcd462"/><path d="M-10-8.500h8l1.500 2.500H-10z" fill="#d99a1e"/><path d="M-7 8.500V1q0-2 2-2H5q2 0 2 2v7.500H3V3h-6v5.500z" fill="#3f98d8"/></svg>
      <svg viewBox="-23.300 -19 46.600 38"><path d="M0-10.500l5 1 4 2.500 1 5v4l-1 5-4 2.500-5 1-5-1-4-2.500-1-5v-4l1-5 4-2.500z" fill="#f3f9fd" stroke="#4a80b5" stroke-width="1.300"/><g fill="none" stroke="#2f6ca5" stroke-width="1.200"><circle r="1.800"/><circle cy="-5.300" r="2.200"/><circle cy="5.300" r="2.200"/><circle cx="-4.700" cy="-2.700" r="2.200"/><circle cx="4.700" cy="-2.700" r="2.200"/><circle cx="-4.700" cy="2.700" r="2.200"/><circle cx="4.700" cy="2.700" r="2.200"/></g><path d="M-19 16.500h38v2.500h-38z" fill="#0a6cc4"/></svg>
      <svg viewBox="-23.300 -19 46.600 38"><path d="M-10-9h20V7h-20z" fill="#0a0a0a" stroke="#777" stroke-width=".8"/><path d="M-10-8.500h20" stroke="#ddd" stroke-width="1.600"/><path d="M-8-5h2m1 0h5M-8-3h3" stroke="#aaa" stroke-width=".8"/><path d="M-19 16.500h38v2.500h-38z" fill="#0a6cc4"/></svg>
    </div>
    <div class="grow"></div>
    <span class="self-center text-[11.500px] tracking-[-0.350px]">Desktop</span>
    <svg class="h-[38px] w-[168px] shrink-0" viewBox="1130 827 168 38" fill="none" stroke="#222" stroke-width="1.200"><path d="M1138 831l3 2.500-3 2.500M1142 831l3 2.500-3 2.500" stroke="#6672a5" stroke-width=".9"/><path d="M1154 849.500l5.700-5.500 5.700 5.500"/><rect x="1179.500" y="839" width="5.500" height="9.500" rx="1.500" fill="#000" stroke="none"/><path d="M1177.500 846v3.500q4.700 3 9.500 0V846M1182.200 850v3M1179 853h6.500"/><path d="M1197.500 843.500h2.500l3-2.500v11l-3-2.500h-2.500z"/><path d="M1205.500 844v4" stroke="#555"/><path d="M1208 842.500q2 4 0 8M1210.500 841q3 5.500 0 11" stroke="#999"/><path d="M1222.500 852q0-10 11-11M1225.500 852q0-7 8-8M1228.500 852q0-4 5-5" stroke="#555"/><circle cx="1232" cy="851" r="1.500" fill="#222" stroke="none"/><path d="M1245.500 843h10.500v7.500h-10.500zM1257 845h1v3.500h-1z" fill="#000"/><path d="M1243.500 840v4h3v-4"/><rect x="1265.500" y="840.500" width="22" height="12"/><path d="M1268 843.500h18M1268 846.500h18" stroke-dasharray="1.200 1.500"/><path d="M1270 850h13"/></svg>
    <span class="w-[34px] self-center text-[11.500px] tracking-[-0.350px]">ENG</span>
    <div class="flex w-[58px] flex-col items-center pt-[2px] text-[11.500px] leading-[17px] tracking-[-0.380px] whitespace-nowrap"><span>12:48</span><span>14-07-2020</span></div>
    <svg class="ml-[16px] h-[38px] w-[38px]" viewBox="1406 827 38 38"><path d="M1406 839h15v11h-9l-3 3v-3h-3z" fill="#111"/><path d="M1408.500 842h10M1408.500 844.500h10M1408.500 847h6" stroke="#ddd"/><path d="M1418 846a3.500 3.500 0 1 0 2.500 5q-3-1-2.500-5z" fill="#111" stroke="#ddd" stroke-width=".8"/><path d="M1440.500 828v36" stroke="#b3b9c6"/></svg>
  </div>
</div>
<script>
  // Drawing grid: four minor cells to each major one.
  const minor = [], major = [];
  const snap = v => Math.floor(v) + 0.5;
  for (let i = -4; i <= 81; i++) {
    const x = 348.4 + i * 9.4;
    if (x > 312 && x < 1109) (i % 4 ? minor : major).push(`M${snap(x)} 250V781`);
  }
  for (let i = -4; i <= 52; i++) {
    const y = 287.3 + i * 9.385;
    if (y > 251 && y < 781) (i % 4 ? minor : major).push(`M310 ${snap(y)}H1110`);
  }
  document.getElementById('minor').setAttribute('d', minor.join(''));
  document.getElementById('major').setAttribute('d', major.join(''));
</script>
</body>
</html>
